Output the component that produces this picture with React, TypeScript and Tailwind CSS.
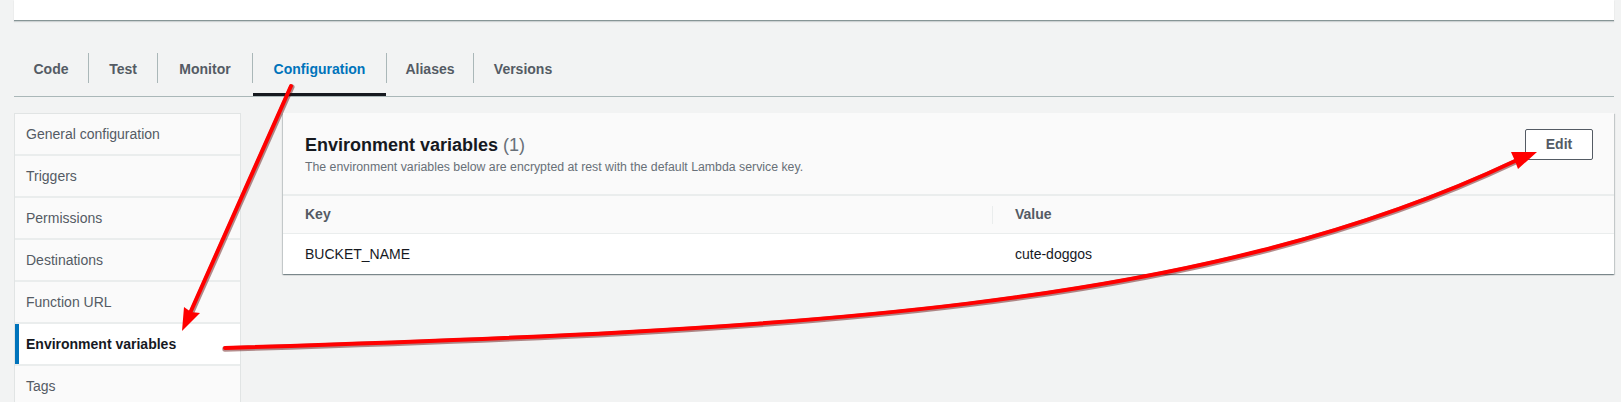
const tabs = [
  { label: 'Code', w: 'w-[74px]' },
  { label: 'Test', w: 'w-[68px]' },
  { label: 'Monitor', w: 'w-[94px]' },
  { label: 'Configuration', w: 'w-[133px]' },
  { label: 'Aliases', w: 'w-[86px]' },
  { label: 'Versions', w: 'w-[98px]' },
];
const menu = [
  'General configuration',
  'Triggers',
  'Permissions',
  'Destinations',
  'Function URL',
  'Environment variables',
  'Tags',
];

const Tabs = ({ active }: { active: string }) => (
  <nav className="mt-[24px] flex border-b border-[#aab7b8]">
    {tabs.map((t, i) => (
      <div key={t.label} className="flex">
        {i > 0 && <span className="mt-[8px] h-[30px] w-px bg-[#aab7b8]" />}
        <button
          className={`h-[51px] ${t.w} border-b-[3px] text-center text-[14px] font-bold leading-[20px] ${
            t.label === active ? 'border-[#16191f] text-[#0073bb]' : 'border-transparent text-[#545b64]'
          }`}
        >
          {t.label}
        </button>
      </div>
    ))}
  </nav>
);

const SideMenu = ({ active }: { active: string }) => (
  <aside className="w-[227px] shrink-0 border border-[#e1e4e4] bg-[#fafafa]">
    {menu.map((m) => (
      <div
        key={m}
        className={`flex h-[42px] items-center border-b-2 border-[#eaeded] pl-[11px] text-[14px] ${
          m === active
            ? 'bg-white font-bold text-[#16191f] shadow-[inset_4px_0_0_#0073bb]'
            : 'text-[#545b64]'
        }`}
      >
        {m}
      </div>
    ))}
  </aside>
);

const EnvCard = () => (
  <section className="flex-1 self-start bg-white shadow-[0_1px_1px_0_rgba(0,28,36,0.3),1px_1px_1px_0_rgba(0,28,36,0.15),-1px_1px_1px_0_rgba(0,28,36,0.15)]">
    <header className="flex items-start justify-between border-b-2 border-[#eaeded] bg-[#fafafa] pl-[22px] pr-[21px] pb-[19px] pt-[16px]">
      <div className="pt-[5px]">
        <h2 className="text-[18px] font-bold leading-[22px] text-[#16191f]">
          Environment variables <span className="font-normal text-[#687078]">(1)</span>
        </h2>
        <p className="mt-[3px] text-[12.3px] leading-[16px] text-[#687078]">
          The environment variables below are encrypted at rest with the default Lambda service key.
        </p>
      </div>
      <button className="h-[31px] w-[68px] rounded-[2px] border border-[#545b64] bg-white text-[14px] font-bold text-[#545b64]">
        Edit
      </button>
    </header>
    <div className="grid grid-cols-[709px_1fr]">
      <div className="flex h-[38px] items-center border-b border-[#eaeded] bg-[#fafafa] pl-[22px] text-[14px] font-bold text-[#545b64]">
        Key
      </div>
      <div className="flex h-[38px] items-center border-b border-[#eaeded] bg-[#fafafa] text-[14px] font-bold text-[#545b64]">
        <span className="mr-[22px] h-[18px] w-px bg-[#eaeded]" />
        Value
      </div>
      <div className="flex h-[40px] items-center pl-[22px] text-[14px] text-[#16191f]">BUCKET_NAME</div>
      <div className="flex h-[40px] items-center pl-[23px] text-[14px] text-[#16191f]">cute-doggos</div>
    </div>
  </section>
);

const Arrows = () => (
  <svg className="pointer-events-none absolute inset-0" width="1621" height="402" viewBox="0 0 1621 402">
    <g fill="none" strokeLinecap="round">
      <path d="M291 86 L191 311" stroke="rgba(90,0,0,0.45)" strokeWidth="5.5" transform="translate(0.8 1)" />
      <path d="M291 86 L191 311" stroke="#ff0000" strokeWidth="4" />
      <path
        d="M225 348 C800 330 1200 310 1515 161"
        stroke="rgba(90,0,0,0.45)"
        strokeWidth="5.5"
        transform="translate(0 1)"
      />
      <path d="M225 348 C800 330 1200 310 1515 161" stroke="#ff0000" strokeWidth="4" />
    </g>
    <polygon points="182,331 200,313 191,312 184,307" fill="#ff0000" />
    <polygon points="1537,152 1518,169 1515,161 1511,152" fill="#ff0000" />
  </svg>
);

export default function App() {
  return (
    <div className="relative h-[402px] w-[1621px] overflow-hidden bg-[#f2f3f3] pl-[14px] pr-[7px] font-['Liberation_Sans',Arial,sans-serif]">
      <div className="h-[21px] border-b border-[#879596] bg-white shadow-[0_1px_1px_rgba(0,28,36,0.15)]" />
      <Tabs active="Configuration" />
      <div className="mt-[16px] flex gap-[42px]">
        <SideMenu active="Environment variables" />
        <EnvCard />
      </div>
      <Arrows />
    </div>
  );
}
